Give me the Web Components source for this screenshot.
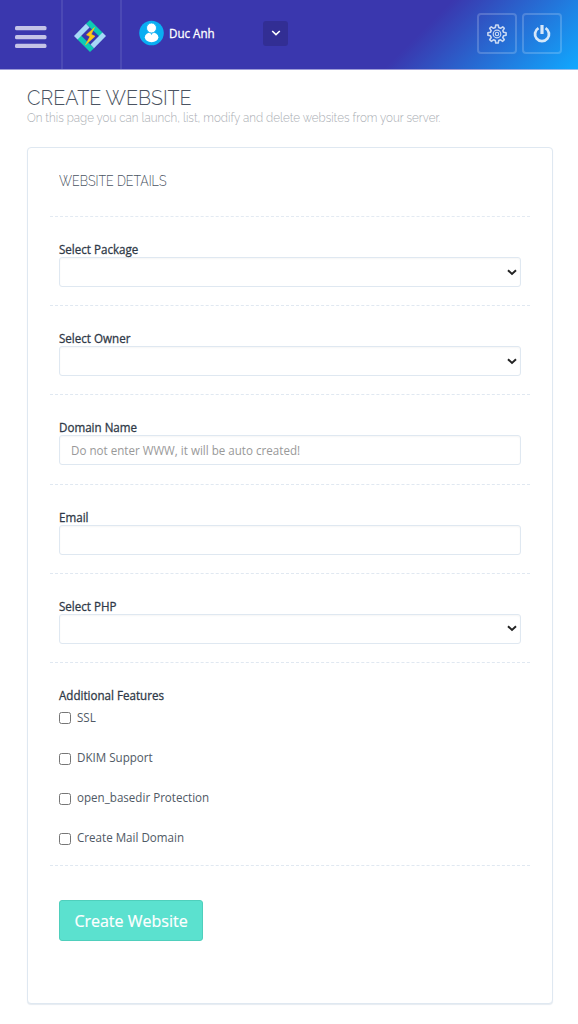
<!DOCTYPE html>
<html lang="en">
<head>
<meta charset="utf-8">
<title>Create Website</title>
<style>
  body {
    margin: 0;
    height: 1024px;
    overflow: hidden;
    background: #fff;
    color: #3e4855;
    font-family: "Open Sans", "Noto Sans", sans-serif;
    font-size: 12.5px;
  }
</style>
</head>
<body>
<top-bar user="Duc Anh"></top-bar>
<page-title heading="CREATE WEBSITE">On this page you can launch, list, modify and delete websites from your server.</page-title>
<form-panel heading="WEBSITE DETAILS">
  <form-row label="Select Package" type="select"></form-row>
  <form-row label="Select Owner" type="select"></form-row>
  <form-row label="Domain Name" type="text" placeholder="Do not enter WWW, it will be auto created!"></form-row>
  <form-row label="Email" type="text"></form-row>
  <form-row label="Select PHP" type="select"></form-row>
  <form-row label="Additional Features" type="group">
    <check-item>SSL</check-item>
    <check-item>DKIM Support</check-item>
    <check-item>open_basedir Protection</check-item>
    <check-item>Create Mail Domain</check-item>
  </form-row>
  <action-button slot="actions">Create Website</action-button>
</form-panel>

<script>
class TopBar extends HTMLElement {
  constructor() {
    super();
    this.attachShadow({mode: 'open'});
  }

  connectedCallback() {
    this.shadowRoot.innerHTML = `
      <style>
        * {
          box-sizing: border-box;
        }

        :host {
          display: flex;
          height: 70px;
          box-sizing: border-box;
          border-bottom: 1px solid rgba(255, 255, 255, 0.5);
          background: linear-gradient(135deg, #3a37ae 0%, #3a37ae 70%, #10a9ff 100%);
          color: #fff;
        }

        svg {
          display: block;
        }

        .cell {
          display: flex;
          align-items: center;
          border-right: 2px solid rgba(255, 255, 255, 0.09);
        }

        .menu {
          width: 63px;
          padding: 5px 0 0 15px;
        }

        .logo {
          width: 59px;
          padding: 3px 0 0 9px;
        }

        .user {
          display: flex;
          align-items: center;
          flex: 1;
          height: 66px;
          padding-left: 17px;
          font-weight: 500;
        }

        .name {
          width: 94px;
          margin-left: 5px;
        }

        .name span {
          display: inline-block;
          transform: scaleX(0.928);
          transform-origin: left;
          -webkit-text-stroke: 0.3px;
        }

        .arrow {
          display: flex;
          align-items: center;
          justify-content: center;
          width: 25px;
          height: 25px;
          border-radius: 3px;
          background: #322e94;
        }

        .tools {
          display: flex;
          gap: 5px;
          padding: 13px 16px 0 0;
        }

        .tool {
          display: flex;
          align-items: center;
          justify-content: center;
          width: 40px;
          height: 41px;
          border: 2px solid rgba(255, 255, 255, 0.19);
          border-radius: 4px;
        }
      </style>
      <div class="cell menu">
        <svg width="32" height="24" viewBox="0 0 32 24" fill="#fff" fill-opacity="0.7">
          <rect y="1" width="31.5" height="4.3" rx="1.6"/>
          <rect y="10" width="31.5" height="4.3" rx="1.6"/>
          <rect y="18.8" width="31.5" height="4.3" rx="1.6"/>
        </svg>
      </div>
      <div class="cell logo">
        <svg width="36" height="36" viewBox="0 0 36 36">
          <path d="M18 2l12.500 12.500L29 20 14 5.800z" fill="#0dcbb4"/>
          <path d="M18 34l4-3.800L7.500 16l-2 5.500z" fill="#0dcbb4"/>
          <path d="M2 18L14 5.800l3.500 3.700-12 12z" fill="#a7d8f7"/>
          <path d="M34 18L22 30.200l-3.500-3.700 12-12z" fill="#a7d8f7"/>
          <path d="M22.500 9.500l-8 7.300 3.500 1.800-4.500 8.200 9.500-8.500-3.800-2z" fill="#ffc814" stroke="#ffc814" stroke-width="0.6"/>
        </svg>
      </div>
      <div class="user">
        <svg width="25" height="26" viewBox="0 0 25 26">
          <circle cx="12.5" cy="13" r="12.3" fill="#0aaef2"/>
          <ellipse cx="12.6" cy="17.3" rx="6.8" ry="5" fill="#fff"/>
          <circle cx="12.5" cy="8" r="5" fill="#fff" stroke="#0aaef2" stroke-width="0.9"/>
          <path d="M11.500 13.200h2l-1 1.700z" fill="#0aaef2"/>
        </svg>
        <span class="name"><span>${this.getAttribute('user')}</span></span>
        <span class="arrow">
          <svg width="10" height="8" viewBox="0 0 10 8" fill="none" stroke="#fff" stroke-width="1.6">
            <path d="M1.200 2l3.800 3.600L8.800 2"/>
          </svg>
        </span>
      </div>
      <div class="tools">
        <span class="tool">
          <svg width="20" height="20" viewBox="0 0 20 20" fill="none" stroke="#fff" stroke-opacity="0.75" stroke-width="1.6" stroke-linejoin="round">
            <path d="M8.300 3.500L8.800 1h2.400l.5 2.500 1.800.8 2.200-1.500 1.600 1.600-1.500 2.200.8 1.700 2.500.5v2.400l-2.500.5-.8 1.800 1.500 2.200-1.600 1.600-2.200-1.500-1.800.8-.5 2.400H8.800l-.5-2.400-1.800-.8-2.200 1.500-1.600-1.600 1.500-2.200-.8-1.800-2.500-.5V8.800l2.500-.5.8-1.700-1.500-2.200 1.600-1.600 2.200 1.500z"/>
            <circle cx="10" cy="10" r="3.800" stroke-width="1.200"/>
            <circle cx="10" cy="10" r="1.700" stroke-width="1.100"/>
          </svg>
        </span>
        <span class="tool">
          <svg width="18" height="20" viewBox="0 0 18 20" fill="none" stroke="#fff" stroke-opacity="0.82" stroke-width="2.8">
            <path d="M5.500 4.100a7 7 0 1 0 7 0"/>
            <path d="M9 1v9" stroke-width="3.2"/>
          </svg>
        </span>
      </div>
    `;
  }
}

class PageTitle extends HTMLElement {
  constructor() {
    super();
    this.attachShadow({mode: 'open'});
  }

  connectedCallback() {
    this.shadowRoot.innerHTML = `
      <style>
        :host {
          display: block;
          height: 77px;
          padding: 17px 27px 0;
          box-sizing: border-box;
          font-family: Raleway, Lato, sans-serif;
          font-weight: 300;
          white-space: nowrap;
        }

        h2 {
          margin: 0;
          font-size: 19.65px;
          font-weight: 300;
          line-height: 23px;
          color: #4a5361;
        }

        p {
          margin: 0;
          font-size: 12.5px;
          line-height: 15px;
          color: #a9adb3;
          transform: scaleX(0.928);
          transform-origin: left;
        }
      </style>
      <h2>${this.getAttribute('heading')}</h2>
      <p><slot></slot></p>
    `;
  }
}

class FormPanel extends HTMLElement {
  constructor() {
    super();
    this.attachShadow({mode: 'open'});
  }

  connectedCallback() {
    this.shadowRoot.innerHTML = `
      <style>
        :host {
          display: block;
          height: 857px;
          margin: 0 25px 0 27px;
          padding: 0 22px;
          box-sizing: border-box;
          border: 1px solid #dfe8f1;
          border-radius: 4px;
          box-shadow: 0 1px 1px #e6ebf1;
          background: #fff;
        }

        h3 {
          height: 69px;
          margin: 0;
          padding: 23px 9px 0;
          box-sizing: border-box;
          border-bottom: 1px dashed #e3eaf2;
          font: 300 14px/20px Raleway, Lato, sans-serif;
          color: #4a5361;
        }

        h3 span {
          display: inline-block;
          transform: scaleX(0.893);
          transform-origin: left;
        }

        .actions {
          padding: 34px 9px 0;
        }
      </style>
      <h3><span>${this.getAttribute('heading')}</span></h3>
      <slot></slot>
      <div class="actions"><slot name="actions"></slot></div>
    `;
  }
}

class FormRow extends HTMLElement {
  constructor() {
    super();
    this.attachShadow({mode: 'open'});
  }

  connectedCallback() {
    const type = this.getAttribute('type');
    let control = '<slot></slot>';

    if (type == 'select') {
      control = `
        <div class="control">
          <svg width="10" height="7" viewBox="0 0 10 7" fill="none" stroke="#222" stroke-width="1.9">
            <path d="M1 1.200L5 5l4-3.800"/>
          </svg>
        </div>
      `;
    } else if (type == 'text') {
      control = `<div class="control"><span>${this.getAttribute('placeholder') || ''}</span></div>`;
    }

    this.shadowRoot.innerHTML = `
      <style>
        :host {
          display: block;
          height: 89.2px;
          padding: 24px 9px 0;
          box-sizing: border-box;
          border-bottom: 1px dashed #e0e8f1;
        }

        :host([type="group"]) {
          height: 203px;
        }

        label {
          display: block;
          height: 16px;
          line-height: 18px;
          font-weight: 500;
          color: #2f3947;
          transform: scaleX(0.928);
          transform-origin: left;
          -webkit-text-stroke: 0.3px;
        }

        .control {
          display: flex;
          align-items: center;
          height: 30px;
          padding: 0 3px 0 11px;
          box-sizing: border-box;
          border: 1px solid #dfe8f1;
          border-radius: 3px;
          box-shadow: inset 0 1px 2px rgba(0, 0, 0, 0.04);
          color: #999;
        }

        .control span {
          transform: scaleX(0.928);
          transform-origin: left;
        }

        svg {
          margin-left: auto;
        }
      </style>
      <label>${this.getAttribute('label')}</label>
      ${control}
    `;
  }
}

class CheckItem extends HTMLElement {
  constructor() {
    super();
    this.attachShadow({mode: 'open'});
    this.shadowRoot.innerHTML = `
      <style>
        :host {
          display: flex;
          align-items: flex-start;
          height: 40.2px;
          padding-top: 5.8px;
          box-sizing: border-box;
          line-height: 18px;
          color: #505965;
        }

        i {
          width: 12px;
          height: 12px;
          margin: 3.7px 6px 0 0;
          box-sizing: border-box;
          border: 1px solid #767676;
          border-radius: 2.5px;
          background: #fff;
        }

        span {
          transform: scaleX(0.928);
          transform-origin: left;
        }
      </style>
      <i></i><span><slot></slot></span>
    `;
  }
}

class ActionButton extends HTMLElement {
  constructor() {
    super();
    this.attachShadow({mode: 'open'});
    this.shadowRoot.innerHTML = `
      <style>
        :host {
          display: flex;
          align-items: center;
          justify-content: center;
          width: 144px;
          height: 41px;
          padding-top: 1px;
          box-sizing: border-box;
          border: 1px solid #4fcfbc;
          border-radius: 3px;
          background: #5be1cf;
          color: #fff;
          font-size: 16px;
          -webkit-text-stroke: 0.2px;
        }
      </style>
      <slot></slot>
    `;
  }
}

customElements.define('top-bar', TopBar);
customElements.define('page-title', PageTitle);
customElements.define('form-panel', FormPanel);
customElements.define('form-row', FormRow);
customElements.define('check-item', CheckItem);
customElements.define('action-button', ActionButton);
</script>
</body>
</html>
